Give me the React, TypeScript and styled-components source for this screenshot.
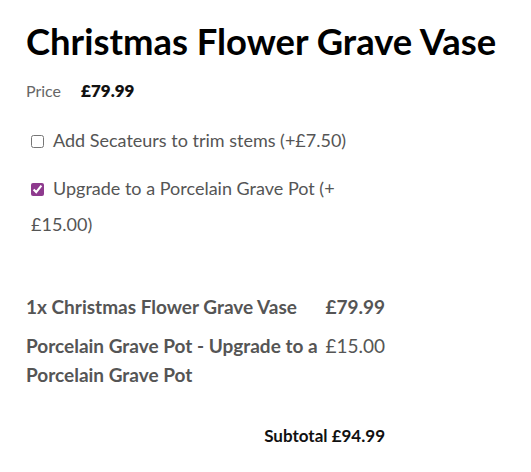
import React from "react";
import styled, { createGlobalStyle } from "styled-components";

const Global = createGlobalStyle`
  html, body { margin: 0; padding: 0; background: #fff; }
  body { font-family: Lato, "Liberation Sans", sans-serif; }
`;

const Page = styled.div`
  padding: 18px 26px 20px 26px;
  width: 531px;
  box-sizing: border-box;
`;

const Title = styled.h1`
  margin: 0;
  font-family: Lato, sans-serif;
  font-weight: 700;
  font-size: 36.4px;
  line-height: 46px;
  color: #000;
  white-space: nowrap;
`;

const PriceRow = styled.div`
  display: flex;
  align-items: baseline;
  gap: 20px;
  margin-top: 16px;
`;

const PriceLabel = styled.span`
  font-family: Lato, sans-serif;
  font-size: 16px;
  color: #666;
`;

const PriceValue = styled.span`
  font-family: Lato, sans-serif;
  font-weight: 800;
  font-size: 17px;
  color: #111;
`;

const Options = styled.div`
  margin-top: 21px;
  width: 330px;
  display: flex;
  flex-direction: column;
  gap: 12px;
`;

const Option = styled.label`
  display: block;
  padding-left: 5px;
  font-family: Lato, sans-serif;
  font-size: 18px;
  line-height: 36px;
  color: #555;
`;

const Check = styled.input`
  width: 13px;
  height: 13px;
  margin: 0 9px 0 0;
  vertical-align: -1px;
  accent-color: #8e3a8e;
`;

const Summary = styled.div`
  margin-top: 50px;
  width: 359px;
  display: grid;
  grid-template-columns: 1fr auto;
  column-gap: 5px;
  row-gap: 10px;
  font-family: Lato, sans-serif;
  font-size: 19px;
  line-height: 29px;
  color: #555;
`;

const Item = styled.div`
  font-weight: 700;
`;

const Amount = styled.div<{ $bold?: boolean }>`
  text-align: right;
  font-weight: ${(p) => (p.$bold ? 700 : 400)};
`;

const Subtotal = styled.div`
  margin-top: 36px;
  width: 359px;
  text-align: right;
  font-family: Lato, sans-serif;
  font-weight: 700;
  font-size: 17px;
  color: #111;
`;

export default function App() {
  return (
    <>
      <Global />
      <Page>
        <Title>Christmas Flower Grave Vase</Title>
        <PriceRow>
          <PriceLabel>Price</PriceLabel>
          <PriceValue>£79.99</PriceValue>
        </PriceRow>
        <Options>
          <Option>
            <Check type="checkbox" />
            Add Secateurs to trim stems (+£7.50)
          </Option>
          <Option>
            <Check type="checkbox" defaultChecked />
            Upgrade to a Porcelain Grave Pot (+£15.00)
          </Option>
        </Options>
        <Summary>
          <Item>1x Christmas Flower Grave Vase</Item>
          <Amount $bold>£79.99</Amount>
          <Item>Porcelain Grave Pot - Upgrade to a Porcelain Grave Pot</Item>
          <Amount>£15.00</Amount>
        </Summary>
        <Subtotal>Subtotal £94.99</Subtotal>
      </Page>
    </>
  );
}
